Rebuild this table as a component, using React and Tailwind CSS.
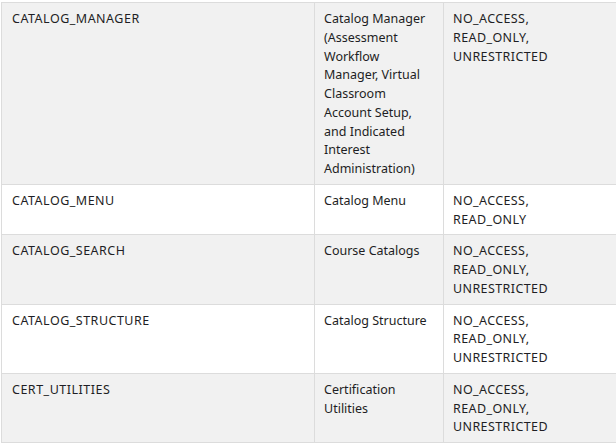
import React from "react";

const rows = [
  {
    key: "CATALOG_MANAGER",
    name: "Catalog Manager (Assessment Workflow Manager, Virtual Classroom Account Setup, and Indicated Interest Administration)",
    access: ["NO_ACCESS,", "READ_ONLY,", "UNRESTRICTED"],
  },
  { key: "CATALOG_MENU", name: "Catalog Menu", access: ["NO_ACCESS,", "READ_ONLY"] },
  { key: "CATALOG_SEARCH", name: "Course Catalogs", access: ["NO_ACCESS,", "READ_ONLY,", "UNRESTRICTED"] },
  { key: "CATALOG_STRUCTURE", name: "Catalog Structure", access: ["NO_ACCESS,", "READ_ONLY,", "UNRESTRICTED"] },
  { key: "CERT_UTILITIES", name: "Certification Utilities", access: ["NO_ACCESS,", "READ_ONLY,", "UNRESTRICTED"] },
];

export default function App() {
  return (
    <div className="w-[616px] h-[444px] overflow-hidden bg-white pt-[2px] pl-[1px]" style={{ fontFamily: '"Noto Sans", sans-serif' }}>
      <table className="border-collapse table-fixed w-[700px] text-[12.5px] leading-[18.75px] text-[#1e1e24]">
        <colgroup>
          <col className="w-[313px]" />
          <col className="w-[129px]" />
          <col className="w-[258px]" />
        </colgroup>
        <tbody>
          {rows.map((r, i) => (
            <tr key={r.key} className={i % 2 === 0 ? "bg-[#f1f1f1]" : "bg-white"}>
              <td className="border border-[#dcdcdc] pl-[10px] pr-[10px] pt-[7px] pb-[5px] align-top tracking-[0.5px]">{r.key}</td>
              <td className="border border-[#dcdcdc] pl-[9px] pr-[8px] pt-[7px] pb-[5px] align-top">{r.name}</td>
              <td className="border border-[#dcdcdc] pl-[9px] pr-[9px] pt-[7px] pb-[5px] align-top tracking-[0.4px]">
                {r.access.map((a) => (
                  <div key={a}>{a}</div>
                ))}
              </td>
            </tr>
          ))}
        </tbody>
      </table>
    </div>
  );
}
